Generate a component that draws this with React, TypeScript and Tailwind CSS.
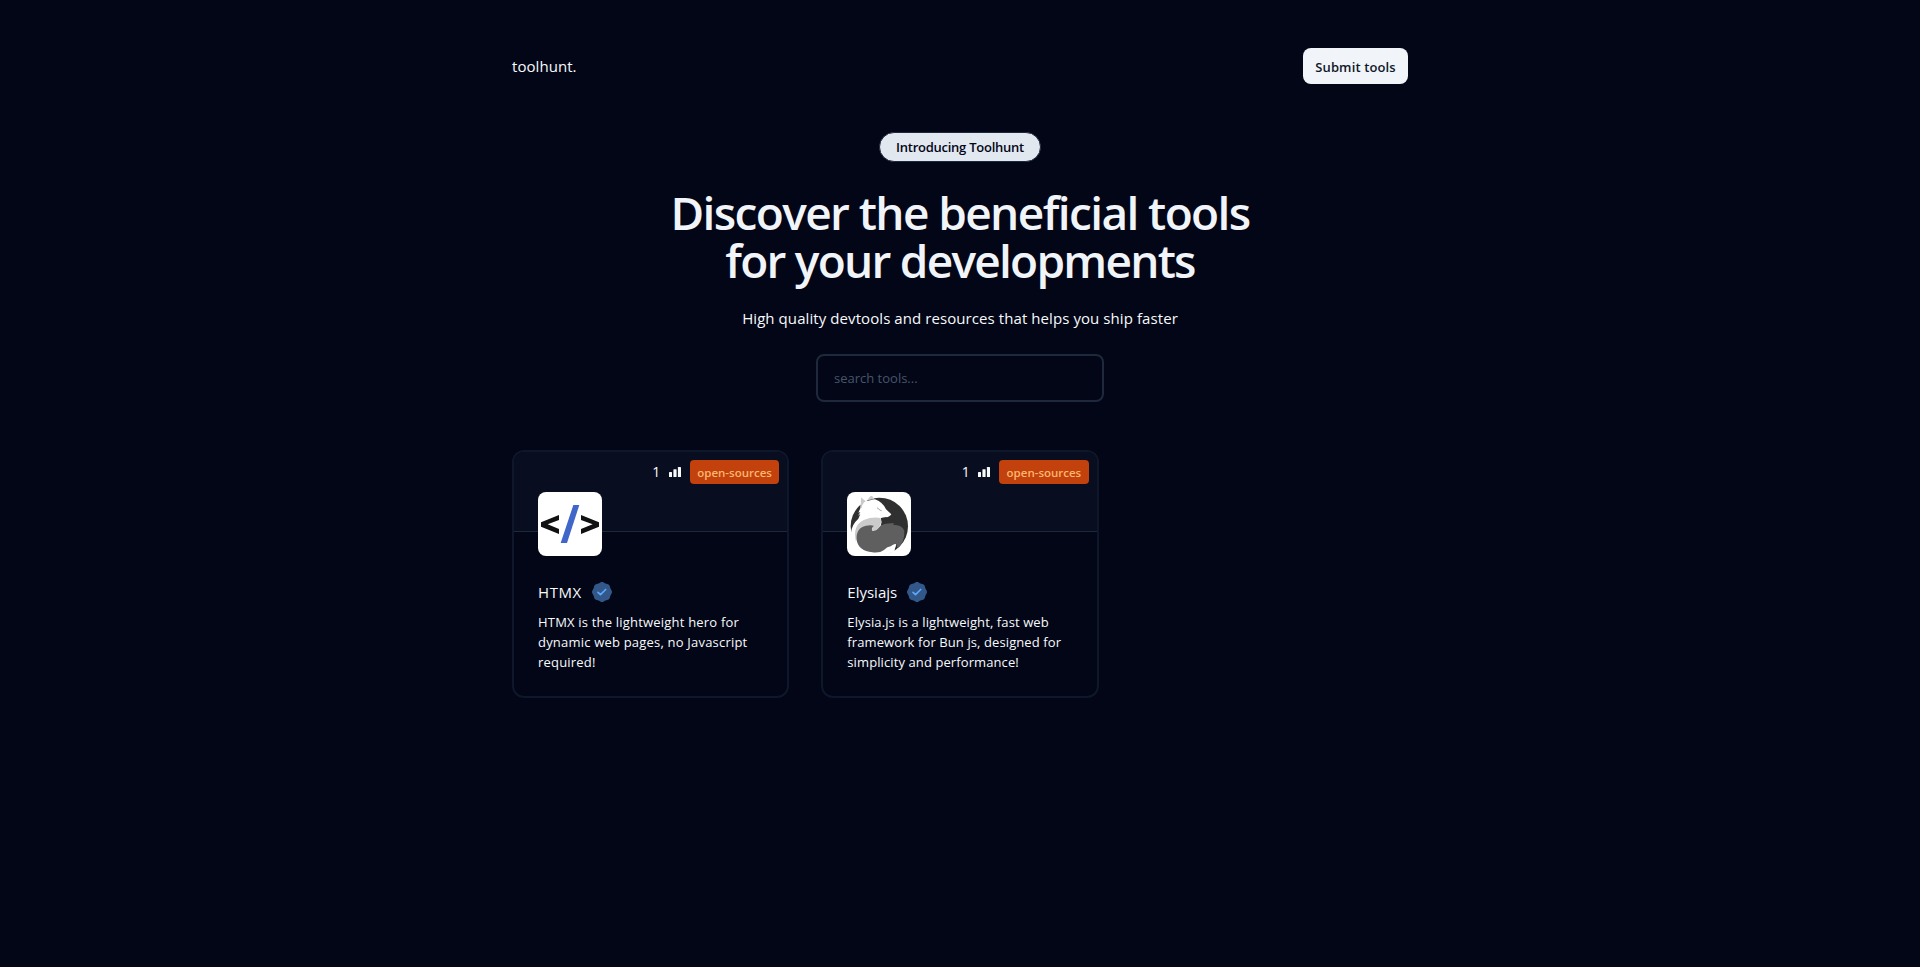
import type { ReactNode } from "react";

type Tool = {
  name: string;
  nameClass: string;
  description: string;
  descriptionClass: string;
  votes: number;
  tag: string;
  logo: ReactNode;
};

function SignalIcon() {
  return (
    <svg viewBox="0 0 12 10" className="h-[10px] w-3 fill-slate-50" aria-hidden="true">
      <rect x="0" y="5" width="3" height="5" rx="0.6" />
      <rect x="4.4" y="2.2" width="3.2" height="7.8" rx="0.6" />
      <rect x="8.9" y="0" width="3.1" height="10" rx="0.6" />
    </svg>
  );
}

const sealPoints = Array.from({ length: 96 }, (_, i) => {
  const angle = (i / 96) * Math.PI * 2;
  const radius = 9.6 + 0.4 * Math.cos(angle * 8);
  return `${(10 + radius * Math.cos(angle)).toFixed(2)},${(10 + radius * Math.sin(angle)).toFixed(2)}`;
}).join(" ");

function VerifiedIcon() {
  return (
    <svg viewBox="0 0 20 20" className="size-5" aria-hidden="true">
      <polygon points={sealPoints} fill="#315889" />
      <path
        d="M6 10.3l2.5 2.4 5.2-5.2"
        fill="none"
        stroke="#60a5fa"
        strokeWidth="1.7"
        strokeLinecap="round"
        strokeLinejoin="round"
      />
    </svg>
  );
}

function HtmxLogo() {
  return (
    <svg viewBox="0 0 192 192" className="size-16" aria-hidden="true">
      <path d="M9 91 63 69v15L29 97l34 14v15L9 104z" fill="#111111" />
      <path d="M129 69l54 22v13l-54 22v-15l35-14-35-13z" fill="#111111" />
      <path d="M106 39h18L87 153H68z" fill="#3f66c8" />
    </svg>
  );
}

function ElysiaLogo() {
  return (
    <svg viewBox="96 156 192 192" className="size-16" aria-hidden="true">
      <circle cx="193" cy="259" r="86" fill="#303030" />
      <path
        d="M136 205L139 172L158 182L180 178Q205 188 213 208L229 223Q224 234 198 234L205 262L243 312L238 334Q200 356 150 346Q98 330 98 285L108 278Q110 254 130 236L136 222L129 227L136 216L130 218Z"
        fill="#ffffff"
      />
      <path d="M137 203L138 172L144 177L152 184Q141 191 140 205Z" fill="#cbcbcb" />
      <path d="M157 180L166 169L171 168L181 179Q168 177 157 180Z" fill="#cbcbcb" />
      <path d="M186 203l10 8 4 1" fill="none" stroke="#777777" strokeWidth="2" />
      <path
        d="M123 305Q111 258 146 240Q172 230 197 234Q203 257 180 273Q168 278 172 264Q148 255 132 272Z"
        fill="#cbcbcb"
      />
      <path d="M198 234Q202 245 197 258L215 252L215 231Z" fill="#303030" />
      <path
        d="M125 300Q122 264 153 257Q170 254 177 258Q169 262 171 272Q183 276 195 259Q207 248 238 250L234 254Q262 254 268 272Q270 305 248 325L243 312Q235 312 229 318Q214 321 207 330Q194 340 172 337Q131 333 125 300Z"
        fill="#5f5f5f"
      />
      <path d="M227 319L243 312Q243 322 236 333Q240 321 227 319Z" fill="#ffffff" />
    </svg>
  );
}

const tools: Tool[] = [
  {
    name: "HTMX",
    nameClass: "tracking-[0.6px]",
    description: "HTMX is the lightweight hero for dynamic web pages, no Javascript required!",
    descriptionClass: "tracking-[0.2px]",
    votes: 1,
    tag: "open-sources",
    logo: <HtmxLogo />,
  },
  {
    name: "Elysiajs",
    nameClass: "tracking-normal",
    description: "Elysia.js is a lightweight, fast web framework for Bun js, designed for simplicity and performance!",
    descriptionClass: "tracking-[0.1px]",
    votes: 1,
    tag: "open-sources",
    logo: <ElysiaLogo />,
  },
];

function ToolCard({ tool }: { tool: Tool }) {
  return (
    <article className="overflow-hidden rounded-xl border-2 border-[#0f172a]">
      <div className="relative flex h-20 items-start justify-end border-b border-[#1e293b] bg-[#080d1f] p-2">
        <div className="flex h-6 items-center">
          <span className="mr-[8.5px] text-[14px] leading-5">{tool.votes}</span>
          <SignalIcon />
          <span className="ml-[9px] flex h-6 w-[89.5px] items-center justify-center rounded bg-[#c2410c] pt-px text-[11.5px] font-semibold text-[#fdb66e]">
            {tool.tag}
          </span>
        </div>
        <div className="absolute top-10 left-6 size-16 overflow-hidden rounded-lg bg-white">{tool.logo}</div>
      </div>
      <div className="flex flex-col gap-2 px-6 pt-12 pb-6">
        <div className="flex items-center gap-[10px]">
          <h2 className={`text-[15px] leading-6 ${tool.nameClass}`}>{tool.name}</h2>
          <VerifiedIcon />
        </div>
        <p className={`text-[13px] leading-5 ${tool.descriptionClass}`}>{tool.description}</p>
      </div>
    </article>
  );
}

export default function App() {
  return (
    <div className="min-h-screen bg-[#020617] font-['Open_Sans','Noto_Sans',sans-serif] text-slate-50">
      <div className="mx-auto flex w-[896px] flex-col py-12">
        <header className="flex items-center justify-between">
          <span className="text-[15px] leading-6 tracking-[0.05px]">toolhunt.</span>
          <button className="flex h-9 w-[105px] items-center justify-center rounded-lg bg-[#f1f5f9] pt-px text-[13px] leading-5 font-semibold tracking-[0.12px] text-[#0f172a]">
            Submit tools
          </button>
        </header>
        <main>
          <section className="flex flex-col items-center pt-12 text-center">
            <div className="flex h-[30px] w-[162px] items-center justify-center rounded-full border border-[#1e293b] bg-[#e2e8f0] text-[13px] leading-5 font-semibold tracking-[-0.25px] text-[#020617]">
              Introducing Toolhunt
            </div>
            <h1 className="mt-[26px] flex flex-col text-[46px] leading-[48px] font-semibold text-[#f1f5f9]">
              <span className="tracking-[-1.6px]">Discover the beneficial tools</span>
              <span className="tracking-[-1.75px]">for your developments</span>
            </h1>
            <p className="mt-[22px] text-[15px] leading-6 tracking-[0.08px]">
              High quality devtools and resources that helps you ship faster
            </p>
            <input
              type="text"
              placeholder="search tools..."
              className="mt-6 h-12 w-72 rounded-lg border-2 border-[#1e293b] bg-transparent px-4 text-[13px] leading-5 placeholder:text-[#475569]"
            />
          </section>
          <section className="grid grid-cols-3 gap-8 pt-12">
            {tools.map((tool) => (
              <ToolCard key={tool.name} tool={tool} />
            ))}
          </section>
        </main>
      </div>
    </div>
  );
}
